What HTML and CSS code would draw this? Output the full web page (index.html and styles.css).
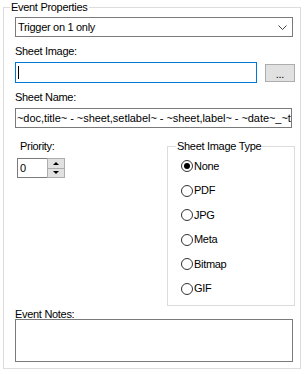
FILE: index.html
```html
<!DOCTYPE html>
<html lang="en">
<head>
    <meta charset="UTF-8">
    <meta name="viewport" content="width=device-width, initial-scale=1.0">
    <title>Event Properties</title>
    <link rel="stylesheet" href="styles.css">
</head>
<body>

    <fieldset class="group outer">
        <legend>Event Properties</legend>

        <!-- Trigger dropdown -->
        <div class="combo">
            <span>Trigger on 1 only</span>
            <svg class="chevron" width="9" height="5" viewBox="0 0 9 5">
                <polyline points="0.5,0.5 4.5,4.5 8.5,0.5" fill="none" stroke="#404040" stroke-width="1"></polyline>
            </svg>
        </div>

        <div class="label">Sheet Image:</div>
        <div class="row">
            <div class="textbox focused"><span class="caret"></span></div>
            <div class="button">...</div>
        </div>

        <div class="label">Sheet Name:</div>
        <div class="textbox name">~doc,title~ - ~sheet,setlabel~ - ~sheet,label~ - ~date~_~t</div>

        <div class="lower">
            <!-- Priority spinner -->
            <div class="priority">
                <div class="label">Priority:</div>
                <div class="spinner">
                    <div class="spin-field">0</div>
                    <div class="spin-buttons">
                        <div class="spin-btn"><span class="arrow up"></span></div>
                        <div class="spin-btn"><span class="arrow down"></span></div>
                    </div>
                </div>
            </div>

            <!-- Image type options -->
            <fieldset class="group types">
                <legend>Sheet Image Type</legend>
                <div class="radio checked"><span class="dot"></span>None</div>
                <div class="radio"><span class="dot"></span>PDF</div>
                <div class="radio"><span class="dot"></span>JPG</div>
                <div class="radio"><span class="dot"></span>Meta</div>
                <div class="radio"><span class="dot"></span>Bitmap</div>
                <div class="radio"><span class="dot"></span>GIF</div>
            </fieldset>
        </div>

        <div class="label notes-label">Event Notes:</div>
        <div class="textbox notes"></div>
    </fieldset>

</body>
</html>
```

FILE: styles.css
```css
/* Basic page styling */
body {
    margin: 0;
    background-color: #fff;
    font-family: "Liberation Sans", Arial, sans-serif;
    font-size: 11px;
    letter-spacing: -0.3px;
    color: #000;
}

/* Group boxes */
.group {
    margin: 0;
    border: 1px solid #dcdcdc;
    min-width: 0;
}

.group legend {
    line-height: 14px;
    padding: 0 1px;
}

.outer {
    margin-left: 3px;
    width: 298px;
    box-sizing: border-box;
    padding: 3px 5px 6px 11px;
}

.outer > legend {
    margin-left: -5px;
}

/* Labels */
.label {
    line-height: 12px;
    margin-top: 8px;
}

/* Dropdown */
.combo {
    width: 278px;
    height: 20px;
    box-sizing: border-box;
    border: 1px solid #7a7a7a;
    display: flex;
    align-items: center;
    justify-content: space-between;
    padding: 0 5px 0 2px;
    line-height: 12px;
}

.chevron {
    display: block;
}

/* Text boxes */
.textbox {
    box-sizing: border-box;
    border: 1px solid #7a7a7a;
    background-color: #fff;
    line-height: 12px;
    overflow: hidden;
    white-space: nowrap;
}

.row {
    display: flex;
    align-items: flex-start;
    margin-top: 5px;
}

.focused {
    width: 242px;
    height: 21px;
    border-color: #0078d7;
    padding: 3px 0 0 2px;
}

.caret {
    display: block;
    width: 1px;
    height: 13px;
    background-color: #000;
}

.button {
    width: 30px;
    height: 18px;
    box-sizing: border-box;
    margin: 2px 0 0 auto;
    background-color: #e1e1e1;
    border: 1px solid #adadad;
    text-align: center;
    line-height: 18px;
}

.name {
    width: 277px;
    height: 20px;
    margin-top: 5px;
    padding: 3px 0 0 1px;
    letter-spacing: -0.05px;
}

/* Priority + image type */
.lower {
    display: flex;
    margin-top: 11px;
}

.priority {
    padding-left: 2px;
}

.priority .label {
    margin: 1px 0 0 3px;
}

.spinner {
    display: flex;
    margin-top: 6px;
    height: 20px;
}

.spin-field {
    width: 30px;
    box-sizing: border-box;
    border: 1px solid #7a7a7a;
    border-right: none;
    padding: 3px 0 0 2px;
    line-height: 12px;
}

.spin-buttons {
    width: 18px;
    display: flex;
    flex-direction: column;
}

.spin-btn {
    flex: 1;
    background-color: #e1e1e1;
    border: 1px solid #adadad;
    display: flex;
    align-items: center;
    justify-content: center;
}

.spin-btn + .spin-btn {
    border-top: none;
}

.arrow {
    width: 0;
    height: 0;
    border-left: 3px solid transparent;
    border-right: 3px solid transparent;
}

.arrow.up {
    border-bottom: 3px solid #000;
}

.arrow.down {
    border-top: 3px solid #000;
}

.types {
    margin-left: auto;
    width: 128px;
    box-sizing: border-box;
    padding: 6.5px 0 9.5px 13px;
}

.types > legend {
    margin-left: -5px;
}

/* Radio buttons */
.radio {
    display: flex;
    align-items: center;
    height: 13px;
    line-height: 13px;
}

.radio + .radio {
    margin-top: 11.6px;
}

.dot {
    width: 12px;
    height: 12px;
    box-sizing: border-box;
    border: 1px solid #333;
    border-radius: 50%;
    margin-right: 1px;
    display: flex;
    align-items: center;
    justify-content: center;
}

.checked .dot::after {
    content: "";
    width: 6px;
    height: 6px;
    border-radius: 50%;
    background-color: #000;
}

/* Notes */
.notes-label {
    line-height: 10px;
    margin-top: 3px;
}

.notes {
    width: 278px;
    height: 43px;
}
```
